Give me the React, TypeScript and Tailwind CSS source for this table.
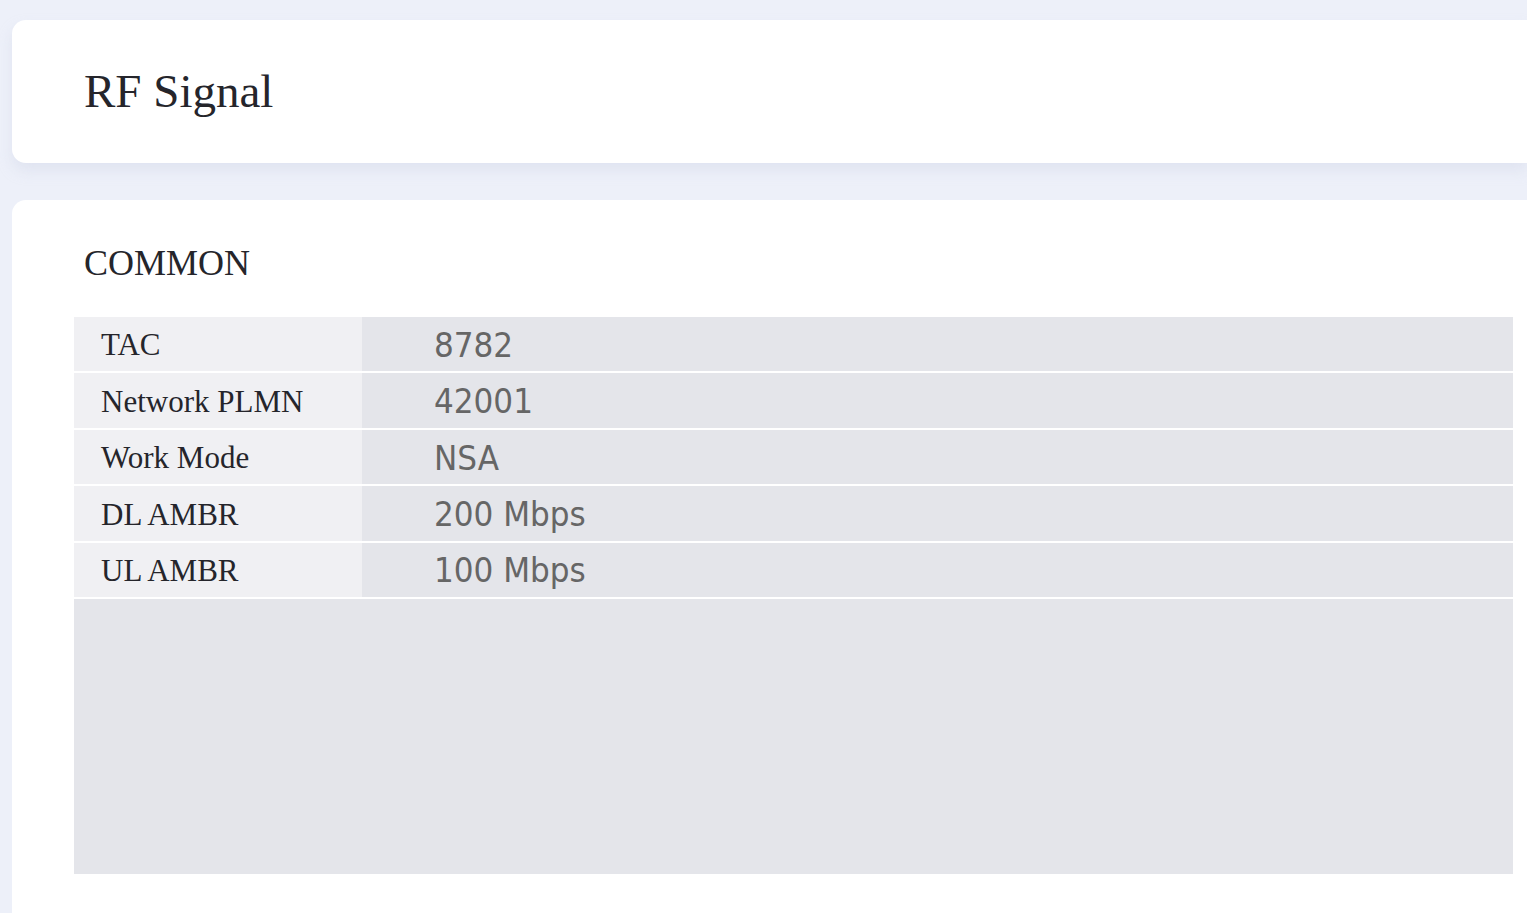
import React from "react";

const rows: [string, string][] = [
  ["TAC", "8782"],
  ["Network PLMN", "42001"],
  ["Work Mode", "NSA"],
  ["DL AMBR", "200 Mbps"],
  ["UL AMBR", "100 Mbps"],
];

export default function App() {
  return (
    <div className="h-[913px] w-full overflow-hidden bg-[#edf0f9] pt-[20px] pl-[12px]">
      <div className="flex h-[143px] items-center rounded-l-[14px] bg-white pl-[72px] shadow-[0_8px_14px_rgba(200,206,225,0.35)]">
        <h1 className="text-[47px] leading-[1.15] text-[#25252b] [font-family:'Liberation_Serif',serif]">
          RF Signal
        </h1>
      </div>
      <div className="mt-[37px] h-[713px] rounded-tl-[14px] bg-white pt-[43px] pl-[62px] pr-[14px]">
        <h2 className="ml-[10px] text-[36px] leading-[40px] text-[#25252b] [font-family:'Liberation_Serif',serif]">
          COMMON
        </h2>
        <div className="mt-[34px] flex flex-col bg-[#e4e5ea]">
          {rows.map(([k, v]) => (
            <div key={k} className="flex h-[56.4px] border-b-2 border-white">
              <div className="flex w-[288px] shrink-0 items-center bg-[#f0f0f3] pl-[27px] pt-[3px] text-[31px] text-[#25252b] [font-family:'Liberation_Serif',serif]">
                {k}
              </div>
              <div className="flex flex-1 items-center bg-[#e4e5ea] pl-[72px] pt-[3px] text-[34.6px] text-[#666666] [font-family:'DejaVu_Sans_Condensed','DejaVu_Sans',sans-serif]">
                {v}
              </div>
            </div>
          ))}
          <div className="h-[275px] bg-[#e4e5ea]" />
        </div>
      </div>
    </div>
  );
}
